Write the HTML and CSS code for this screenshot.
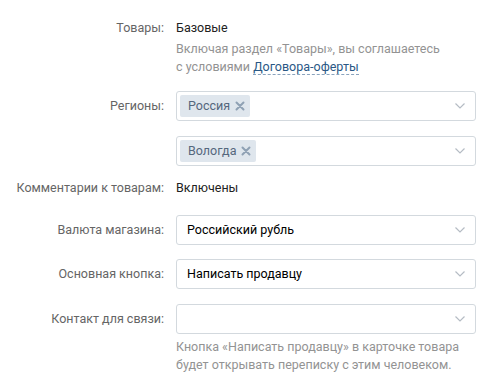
FILE: index.html
```html
<!DOCTYPE html>
<html lang="ru">
<head>
<meta charset="utf-8">
<link rel="stylesheet" href="styles.css">
</head>
<body>
<div class="form">
  <div class="row row-text row-first">
    <div class="label">Товары:</div>
    <div class="value">
      <div class="value-text">Базовые</div>
      <div class="hint">Включая раздел «Товары», вы соглашаетесь<br>с условиями <span class="link">Договора-оферты</span></div>
    </div>
  </div>

  <div class="row row-field row-gap15">
    <div class="label">Регионы:</div>
    <div class="field field-tags">
      <span class="chip">Россия<svg class="chip-x" width="10" height="10" viewBox="0 0 10 10"><path d="M1.5 1.5 L8.5 8.5 M8.5 1.5 L1.5 8.5" stroke="currentColor" stroke-width="2" stroke-linecap="round"/></svg></span>
      <svg class="chev" width="10" height="6" viewBox="0 0 10 6"><path d="M0.5 0.5 L5 5 L9.5 0.5" fill="none" stroke="currentColor" stroke-width="1.2"/></svg>
    </div>
  </div>

  <div class="row row-field row-gap15">
    <div class="label"></div>
    <div class="field field-tags">
      <span class="chip">Вологда<svg class="chip-x" width="10" height="10" viewBox="0 0 10 10"><path d="M1.5 1.5 L8.5 8.5 M8.5 1.5 L1.5 8.5" stroke="currentColor" stroke-width="2" stroke-linecap="round"/></svg></span>
      <svg class="chev" width="10" height="6" viewBox="0 0 10 6"><path d="M0.5 0.5 L5 5 L9.5 0.5" fill="none" stroke="currentColor" stroke-width="1.2"/></svg>
    </div>
  </div>

  <div class="row row-text row-gap13">
    <div class="label">Комментарии к товарам:</div>
    <div class="value"><div class="value-text">Включены</div></div>
  </div>

  <div class="row row-field row-gap18">
    <div class="label">Валюта магазина:</div>
    <div class="field field-select">
      <span class="select-text">Российский рубль</span>
      <svg class="chev" width="10" height="6" viewBox="0 0 10 6"><path d="M0.5 0.5 L5 5 L9.5 0.5" fill="none" stroke="currentColor" stroke-width="1.2"/></svg>
    </div>
  </div>

  <div class="row row-field row-gap14">
    <div class="label">Основная кнопка:</div>
    <div class="field field-select">
      <span class="select-text">Написать продавцу</span>
      <svg class="chev" width="10" height="6" viewBox="0 0 10 6"><path d="M0.5 0.5 L5 5 L9.5 0.5" fill="none" stroke="currentColor" stroke-width="1.2"/></svg>
    </div>
  </div>

  <div class="row row-field row-gap15">
    <div class="label">Контакт для связи:</div>
    <div class="value">
      <div class="field field-select">
        <span class="select-text"></span>
        <svg class="chev" width="10" height="6" viewBox="0 0 10 6"><path d="M0.5 0.5 L5 5 L9.5 0.5" fill="none" stroke="currentColor" stroke-width="1.2"/></svg>
      </div>
      <div class="hint hint-after">Кнопка «Написать продавцу» в карточке товара<br>будет открывать переписку с этим человеком.</div>
    </div>
  </div>
</div>
</body>
</html>
```

FILE: styles.css
```css
html, body {
  margin: 0;
  padding: 0;
  background: #ffffff;
}

body {
  font-family: Roboto, "Noto Sans", Arial, sans-serif;
  font-size: 12.5px;
  line-height: 18px;
  color: #000;
}

.form {
  padding-top: 19px;
  width: 476px;
}

.row {
  display: grid;
  grid-template-columns: 164px 300px;
  column-gap: 12px;
  align-items: start;
}

.row-gap13 { margin-top: 13px; }
.row-gap14 { margin-top: 14px; }
.row-gap15 { margin-top: 15px; }
.row-gap18 { margin-top: 18px; }

.label {
  text-align: right;
  color: #656565;
  white-space: nowrap;
}

.row-field .label {
  padding-top: 6px;
}

.value-text {
  color: #222;
}

.hint {
  color: #939393;
  margin-top: 3px;
}

.hint-after {
  margin-top: 4px;
}

.link {
  color: #2a5885;
  border-bottom: 1px dashed #8aa3bd;
}

.field {
  box-sizing: border-box;
  height: 30px;
  width: 300px;
  border: 1px solid #d3d9de;
  border-radius: 3px;
  display: flex;
  align-items: center;
  background: #fff;
}

.field-tags {
  padding: 3px 10px 3px 3px;
}

.field-select {
  padding: 0 10px 0 10px;
}

.select-text {
  flex: 1;
  color: #000;
}

.chip {
  display: inline-flex;
  align-items: center;
  height: 22px;
  box-sizing: border-box;
  padding: 0 5px 0 8px;
  background: #dfe6ed;
  border-radius: 2px;
  color: #55677d;
}

.chip-x {
  margin-left: 5px;
  color: #8fa1b4;
}

.chev {
  margin-left: auto;
  color: #b5bcc4;
  flex: none;
}
```
